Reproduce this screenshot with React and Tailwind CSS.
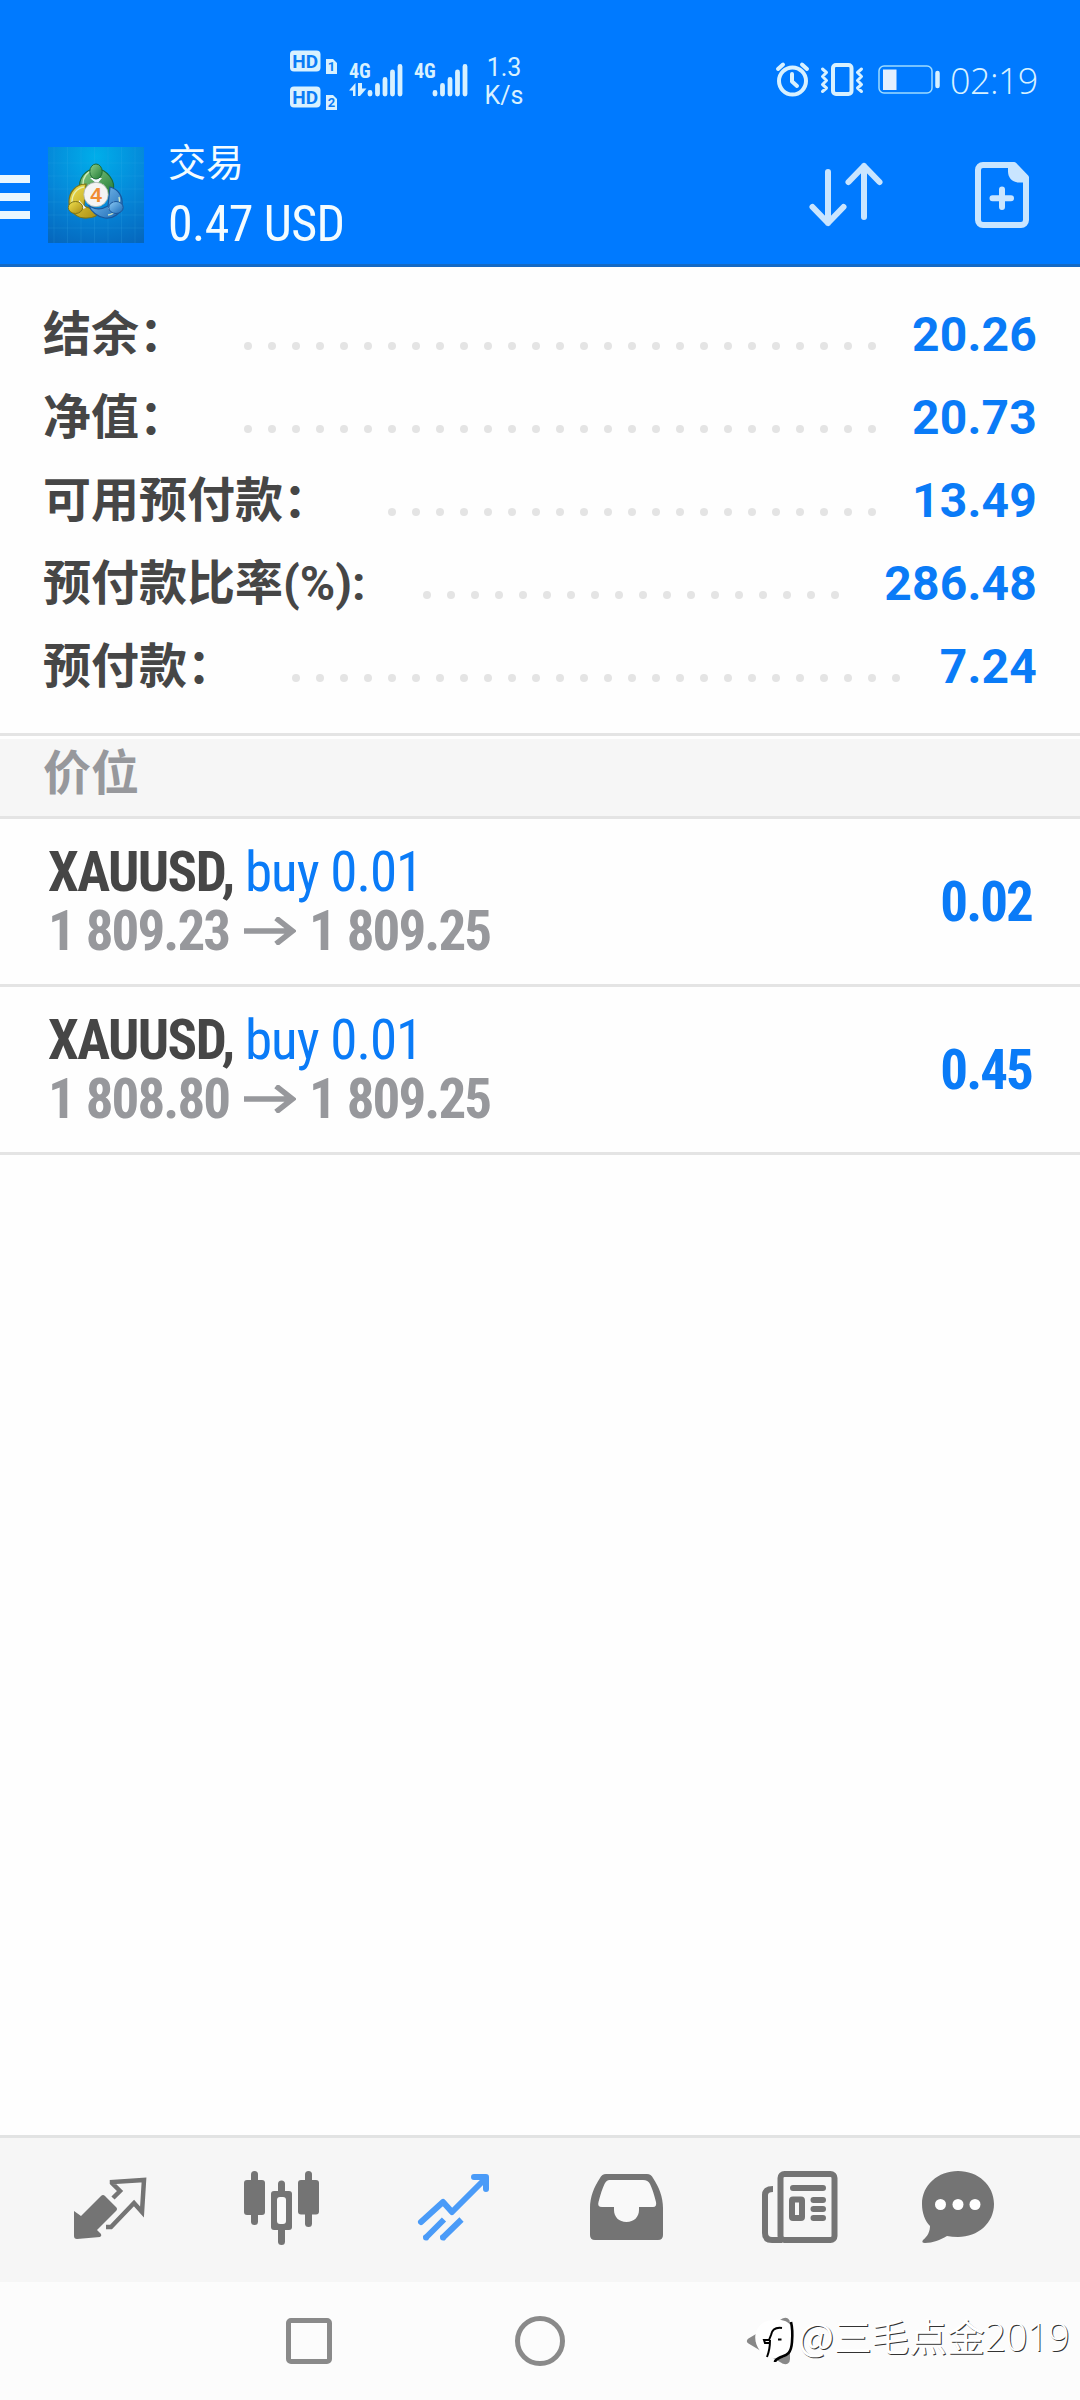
const summary = [
  { label: "结余：", value: "20.26", dots: 27, pad: "pr-[204px]" },
  { label: "净值：", value: "20.73", dots: 27, pad: "pr-[204px]" },
  { label: "可用预付款：", value: "13.49", dots: 21, pad: "pr-[204px]" },
  { label: "预付款比率(%):", value: "286.48", dots: 18, pad: "pr-[241px]" },
  { label: "预付款：", value: "7.24", dots: 26, pad: "pr-[180px]" },
];

const positions = [
  {
    id: 1,
    symbol: "XAUUSD,",
    type: "buy 0.01",
    open: "1 809.23",
    current: "1 809.25",
    profit: "0.02",
  },
  {
    id: 2,
    symbol: "XAUUSD,",
    type: "buy 0.01",
    open: "1 808.80",
    current: "1 809.25",
    profit: "0.45",
  },
];

function HdBadge({ sim }) {
  return (
    <svg width="50" height="24" viewBox="0 0 50 24">
      <rect x="0" y="0.5" width="30.5" height="21" rx="4" fill="#d8f1ff" />
      <text
        x="15.2"
        y="17.5"
        textAnchor="middle"
        className="font-['Roboto'] text-[19px] font-bold"
        fill="#0a7cf5"
      >
        HD
      </text>
      <path d="M36 9h7l4 4v11H36z" fill="#d8f1ff" />
      <text
        x="41.4"
        y="21"
        textAnchor="middle"
        className="font-['Roboto'] text-[13px] font-bold"
        fill="#0a7cf5"
      >
        {sim}
      </text>
    </svg>
  );
}

function Signal({ data }) {
  return (
    <svg width="56" height="56" viewBox="0 -10 56 56">
      <text
        x="0"
        y="17"
        className="font-['Roboto_Condensed'] text-[20px] font-bold"
        fill="#d8f1ff"
      >
        4G
      </text>
      {data && (
        <path d="M6.500 35V22L0 29.500h4V35zM9 22v13h2l6.500-7.500H13V22z" fill="#d8f1ff" />
      )}
      <g stroke="#d8f1ff" strokeWidth="4.800" strokeLinecap="round">
        <path d="M21 31.500v1.500M28.500 24.500V33M36 18.500V33M43.500 11V33M51 5.500V33" />
      </g>
    </svg>
  );
}

function StatusBar() {
  return (
    <div className="flex h-[130px] pt-[50px] pl-[290px] text-[#d8f1ff]">
      <div className="flex flex-col gap-3">
        <HdBadge sim="1" />
        <HdBadge sim="2" />
      </div>
      <div className="flex gap-[9px] pl-[9px] pt-[1px]">
        <Signal data />
        <Signal />
      </div>
      <div className="flex w-[48px] flex-col items-center text-[25px] leading-7 pt-[4px] ml-[10px]">
        <span>1.3</span>
        <span>K/s</span>
      </div>
      <svg
        className="ml-[245px]"
        width="172"
        height="60"
        viewBox="773 50 172 60"
        fill="none"
        stroke="#d8f1ff"
        strokeWidth="4"
        strokeLinecap="round"
        strokeLinejoin="round"
      >
        <circle cx="792.500" cy="81" r="13.500" />
        <path d="M792 74v7.500l5 4.500M778 69l5-4.500M807 69l-5-4.500" />
        <rect x="833" y="65" width="18.500" height="29" rx="3" />
        <path
          d="M822.500 69l4 3.500-4 4 4 4-4 4 4 3.500-4 3.500M861.500 69l-4 3.500 4 4-4 4 4 4-4 3.500 4 3.500"
          strokeWidth="3"
        />
        <rect x="879" y="66" width="53" height="27" rx="5" strokeWidth="1.500" stroke="#9fdcff" />
        <path d="M937.500 73v13" strokeWidth="4.500" />
        <path d="M883 69.500h13.500v20.500H883z" fill="#e4f0ff" stroke="none" />
      </svg>
      <span className="ml-[5px] mt-[5px] font-['Open_Sans'] text-[36px] leading-[52px] font-light tracking-[-0.6px]">
        02:19
      </span>
    </div>
  );
}

function AppLogo() {
  return (
    <svg width="96" height="96" viewBox="0 0 96 96">
      <defs>
        <radialGradient id="sky" cx="0.5" cy="0.1" r="1">
          <stop offset="0" stopColor="#00aeea" />
          <stop offset="0.55" stopColor="#0586d8" />
          <stop offset="1" stopColor="#0567bd" />
        </radialGradient>
        <linearGradient id="green" x1="0" y1="0" x2="1" y2="1">
          <stop offset="0" stopColor="#8fd08a" />
          <stop offset="1" stopColor="#1f7a35" />
        </linearGradient>
        <linearGradient id="yellow" x1="0" y1="0" x2="1" y2="1">
          <stop offset="0" stopColor="#f2e250" />
          <stop offset="1" stopColor="#a88a10" />
        </linearGradient>
        <linearGradient id="blue" x1="0" y1="0" x2="1" y2="1">
          <stop offset="0" stopColor="#8ccbf5" />
          <stop offset="1" stopColor="#1767b5" />
        </linearGradient>
      </defs>
      <rect width="96" height="96" fill="url(#sky)" />
      <path
        d="M6 0v96M19.500 0v96M33 0v96M46.500 0v96M60 0v96M73.500 0v96M87 0v96M0 16h96M0 29h96M0 42h96M0 55h96M0 68h96M0 81h96"
        stroke="#3fb4ee"
        strokeOpacity="0.22"
        strokeWidth="0.8"
      />
      <path
        d="M32 42c-2-10 5-20 16-20s20 12 17 22c-2 5-6 4-9 0l-8-10-8 5z"
        fill="url(#green)"
        stroke="#1d6b35"
        strokeWidth="1.200"
      />
      <path
        d="M38 37c-10 0-17 8-17 18s9 17 18 16c6 0 11-3 13-6l-16-6z"
        fill="url(#yellow)"
        stroke="#7d7418"
        strokeWidth="1.200"
      />
      <path
        d="M62 40c8 2 13 9 12 18s-9 14-17 13c-8-1-14-7-16-12 7 4 14 3 19 0z"
        fill="url(#blue)"
        stroke="#1a579b"
        strokeWidth="1.200"
      />
      {/* light rims on the three figures */}
      <path
        d="M35 37c0-7 4-12 9-13M24 55c0-8 5-14 12-15M71 50c2 8-3 17-11 18"
        fill="none"
        stroke="#e9f7c8"
        strokeOpacity="0.8"
        strokeWidth="1.400"
      />
      <path d="M42 31h12l-5 6zM31 53l7 8-8 2zM66 54l-6 8 8 1z" fill="#f3f8ff" />
      <ellipse cx="48" cy="24.500" rx="6.200" ry="7.500" fill="url(#green)" stroke="#1d6b35" />
      <ellipse cx="27.500" cy="60.500" rx="7.200" ry="6" fill="url(#yellow)" stroke="#7d7418" />
      <ellipse cx="68" cy="60.500" rx="7.200" ry="6" fill="url(#blue)" stroke="#1a579b" />
      <circle cx="48" cy="47.500" r="12.200" fill="#f4f4f4" stroke="#a9b4ae" strokeWidth="0.800" />
      <text
        x="48"
        y="55"
        textAnchor="middle"
        className="font-['Liberation_Sans'] text-[21px] font-bold"
        fill="#f08c34"
      >
        4
      </text>
    </svg>
  );
}

function Header() {
  return (
    <div className="flex h-[134px] pt-[17px] text-[#f4fcff]">
      <div className="flex w-[30px] flex-col gap-[10px] pt-7">
        <div className="h-2 bg-[#eaf7ff]"></div>
        <div className="h-2 bg-[#eaf7ff]"></div>
        <div className="h-2 bg-[#eaf7ff]"></div>
      </div>
      <div className="ml-[18px]">
        <AppLogo />
      </div>
      <div className="ml-6 w-[600px]">
        <div className="text-[38px] leading-[32px]">交易</div>
        <div className="mt-[16px] font-['Roboto_Condensed'] text-[50px] leading-[58px] tracking-[-0.6px]">
          0.47 USD
        </div>
      </div>
      <svg
        className="ml-[39px] mt-[11px]"
        width="80"
        height="76"
        viewBox="807 158 80 76"
        fill="none"
        stroke="#c9e5ff"
        strokeWidth="6"
        strokeLinecap="round"
        strokeLinejoin="round"
      >
        <path d="M828 172v51M812.500 207L828 223l15.500-16M864 217v-51M848.500 182L864 166l15.500 16" />
      </svg>
      <svg
        className="ml-[83px] mt-[11px]"
        width="70"
        height="76"
        viewBox="970 158 70 76"
        fill="none"
        stroke="#c9e5ff"
        strokeWidth="6"
        strokeLinecap="round"
        strokeLinejoin="round"
      >
        <path d="M983 165h31l12 12.500V220a5 5 0 0 1-5 5H983a5 5 0 0 1-5-5V170a5 5 0 0 1 5-5z" />
        <path d="M1008 163h7l13 14v5.500h-9c-7 0-11-5-11-11z" fill="#c9e5ff" stroke="none" />
        <path d="M1002 189.500v17.500M992.500 198.200h18.500" />
      </svg>
    </div>
  );
}

function Summary() {
  return (
    <div className="h-[466px] pt-[26px]">
      {summary.map((row) => (
        <div key={row.label} className="relative h-[83px] px-[43px]">
          <div className="flex h-full items-center justify-between text-[48px] leading-[83px] font-bold">
            <span className="text-[#464646]">{row.label}</span>
            <span className="tracking-[0.2px] text-[#0a7bf7]">{row.value}</span>
          </div>
          <div className={`absolute inset-x-0 top-[49px] flex justify-end gap-4 ${row.pad}`}>
            {Array.from({ length: row.dots }, (_, i) => (
              <div key={i} className="size-2 rounded-full bg-[#e4e4e4]"></div>
            ))}
          </div>
        </div>
      ))}
    </div>
  );
}

function Position({ item }) {
  return (
    <div className="flex h-[168px] items-center justify-between border-b-3 border-[#e4e4e4] pl-12 pr-[48px] font-['Roboto_Condensed'] text-[55px] font-bold">
      <div>
        <div className="flex h-[59px] items-center leading-[59px]">
          <span className="w-[197px] tracking-[-1.600px] text-[#464646]">{item.symbol}</span>
          <span className="font-normal tracking-[-1px] text-[#0a7bf7]">{item.type}</span>
        </div>
        <div className="flex h-[59px] items-center leading-[59px] text-[#97989c]">
          <span className="w-[196px] tracking-[-1.900px] [word-spacing:1px]">{item.open}</span>
          <svg
            width="52"
            height="28"
            viewBox="0 0 52 28"
            fill="none"
            stroke="currentColor"
            strokeWidth="5.500"
          >
            <path d="M0 14h48M32 1L48.500 14 32 27" />
          </svg>
          <span className="ml-[13px] tracking-[-1.900px] [word-spacing:1px]">{item.current}</span>
        </div>
      </div>
      <span className="pt-[2px] tracking-[-1.900px] text-[#0a7bf7]">{item.profit}</span>
    </div>
  );
}

function TabBar() {
  return (
    <div className="flex h-[147px] gap-[83px] border-t-3 border-[#e2e3e3] bg-[#f6f6f6] pl-[65px] pt-[22px]">
      {/* quotes */}
      <svg className="shrink-0" width="90" height="90" viewBox="65 2160 90 90" fill="#747474">
        <path d="M74 2211l7 5 20-20q2-2 4 0l11 11q2 2 0 4l-19 19 4 4q1 2-1 3l-23 2q-3 0-3-3z" />
        <path
          d="M113 2198l7-7-8-8v-1l32-2-2 32-8-9-23 24h-5"
          fill="none"
          stroke="#747474"
          strokeWidth="4.500"
        />
      </svg>
      {/* chart */}
      <svg className="shrink-0" width="90" height="90" viewBox="238 2160 90 90" fill="#747474">
        <rect x="244" y="2180" width="21" height="35" rx="3" />
        <rect x="251" y="2171" width="7" height="54" rx="3.500" />
        <rect x="298" y="2180" width="21" height="34.500" rx="3" />
        <rect x="305" y="2171" width="7" height="56" rx="3.500" />
        <rect x="278" y="2180.500" width="7" height="64.500" rx="3.500" />
        <rect x="271" y="2191" width="21" height="39" rx="3" />
        <rect x="277" y="2197" width="9" height="27" rx="3" fill="#f9f9f9" />
      </svg>
      {/* trade */}
      <svg
        className="shrink-0"
        width="90"
        height="90"
        viewBox="411 2160 90 90"
        fill="none"
        stroke="#4a9bf8"
        strokeWidth="6"
      >
        <path d="M421 2222l22-20 9 10 33-33" strokeLinecap="round" strokeLinejoin="round" />
        <path d="M474 2177h12v12" strokeLinecap="round" strokeLinejoin="round" />
        <path d="M425 2238.500l19-19M442 2238.500l19.500-19" />
        <circle cx="426" cy="2237.500" r="3" fill="#4a9bf8" stroke="none" />
        <circle cx="443" cy="2237.500" r="3" fill="#4a9bf8" stroke="none" />
      </svg>
      {/* history */}
      <svg className="shrink-0" width="90" height="90" viewBox="584 2160 90 90" fill="#747474">
        <path d="M606 2174h41q4 0 6 4c6 9 10 19 10 30v27q0 5-5 5h-63q-5 0-5-5v-27c0-11 4-21 10-30q2-4 6-4z" />
        <path
          d="M609 2180h34q5 0 7 4c2 4 4 10 6 18q1 5-3 5h-14v3c0 7-5 12-12.500 12s-12.500-5-12.500-12v-3h-12q-5 0-3.500-5c2-8 4-14 6-18q2-4 5-4z"
          fill="#f9f9f9"
        />
      </svg>
      {/* news */}
      <svg
        className="shrink-0"
        width="90"
        height="90"
        viewBox="757 2160 90 90"
        fill="none"
        stroke="#747474"
        strokeWidth="6"
      >
        <rect x="780.500" y="2174" width="54" height="66" rx="4" />
        <path d="M773 2189q-8 0-8 6v38q0 7 7 7h10" />
        <path
          d="M793 2188h30M813.500 2200h9.500M813.500 2209h9.500M813.500 2218h9.500"
          strokeLinecap="round"
        />
        <rect x="792" y="2199.500" width="10" height="18.500" rx="1" />
      </svg>
      {/* messages */}
      <svg
        className="ml-[-17px] shrink-0"
        width="90"
        height="90"
        viewBox="913 2160 90 90"
        fill="#747474"
      >
        <path d="M958 2171c20 0 36 14 36 33s-16 33-36 33q-6 0-11-1c-7 4-14 7-22 7q-4 0-2-3c5-4 7-9 7-14-5-5-8-13-8-22 0-19 16-33 36-33z" />
        <circle cx="940.500" cy="2204.500" r="5.500" fill="#fff" />
        <circle cx="958" cy="2204.500" r="5.500" fill="#fff" />
        <circle cx="975" cy="2204.500" r="5.500" fill="#fff" />
      </svg>
    </div>
  );
}

function NavBar() {
  return (
    <div className="relative flex h-[118px] bg-[#fcfcfc] pl-[286px] pt-[34px]">
      <div className="mt-[2px] size-[46px] rounded-[5px] border-5 border-[#8a8a8a]"></div>
      <div className="ml-[183px] size-[50px] rounded-full border-5 border-[#8a8a8a]"></div>
      <svg className="ml-[180px]" width="50" height="50" viewBox="745 2316 50 50">
        <path
          d="M750 2341l34-20q3-1 3 2v36q0 3-3 2z"
          fill="none"
          stroke="#888888"
          strokeWidth="6"
          strokeLinejoin="round"
        />
      </svg>
      {/* watermark sits over the back button */}
      <div className="absolute left-[753px] top-[32px] flex items-start">
        <svg width="44" height="54" viewBox="753 2314 44 54">
          <path
            d="M774 2320c8-1 14 1 17 6 4 6 3 18 0 25-3 5-9 6-13 8-6-1-13-2-18-8-6-8-6-17-2-23 3-5 9-8 16-8z"
            fill="#fff"
          />
          <path
            d="M791 2322q2 8 1 20c-1 14-7 13-13 16q-4 2-4 4"
            fill="none"
            stroke="#000"
            strokeWidth="2.600"
          />
          <path
            d="M782 2328c-7-1-10 2-11 7l-2 5h-5l1 3h4M770 2340c0 8-1 12-3 17"
            fill="none"
            stroke="#000"
            strokeWidth="2"
          />
          <rect x="778" y="2338.500" width="3.500" height="2" />
        </svg>
        <span className="-mt-[6px] ml-px whitespace-nowrap font-['Noto_Sans_CJK_SC'] text-[38px] leading-[54px] font-normal tracking-[-0.3px] text-white [text-shadow:1px_1px_0_#333]">
          @三毛点金
          <span className="font-['Open_Sans'] text-[38px] font-light tracking-[-0.5px]">2019</span>
        </span>
      </div>
    </div>
  );
}

export default function App() {
  return (
    <div className="flex h-[2400px] w-[1080px] flex-col overflow-hidden bg-[#fefefe] font-['Roboto','Noto_Sans_CJK_SC',sans-serif]">
      <div className="h-[267px] border-b-3 border-[#1469c4] bg-[#007aff]">
        <StatusBar />
        <Header />
      </div>
      <Summary />
      <div className="h-[3px] bg-[#e4e4e4]"></div>
      <div className="mt-[3px] h-20 border-b-3 border-[#e4e4e4] bg-[#f6f6f6] pl-[43px] text-[48px] leading-[70px] font-bold text-[#97989c]">
        价位
      </div>
      {positions.map((item) => (
        <Position key={item.id} item={item} />
      ))}
      <div className="flex-1"></div>
      <TabBar />
      <NavBar />
    </div>
  );
}
